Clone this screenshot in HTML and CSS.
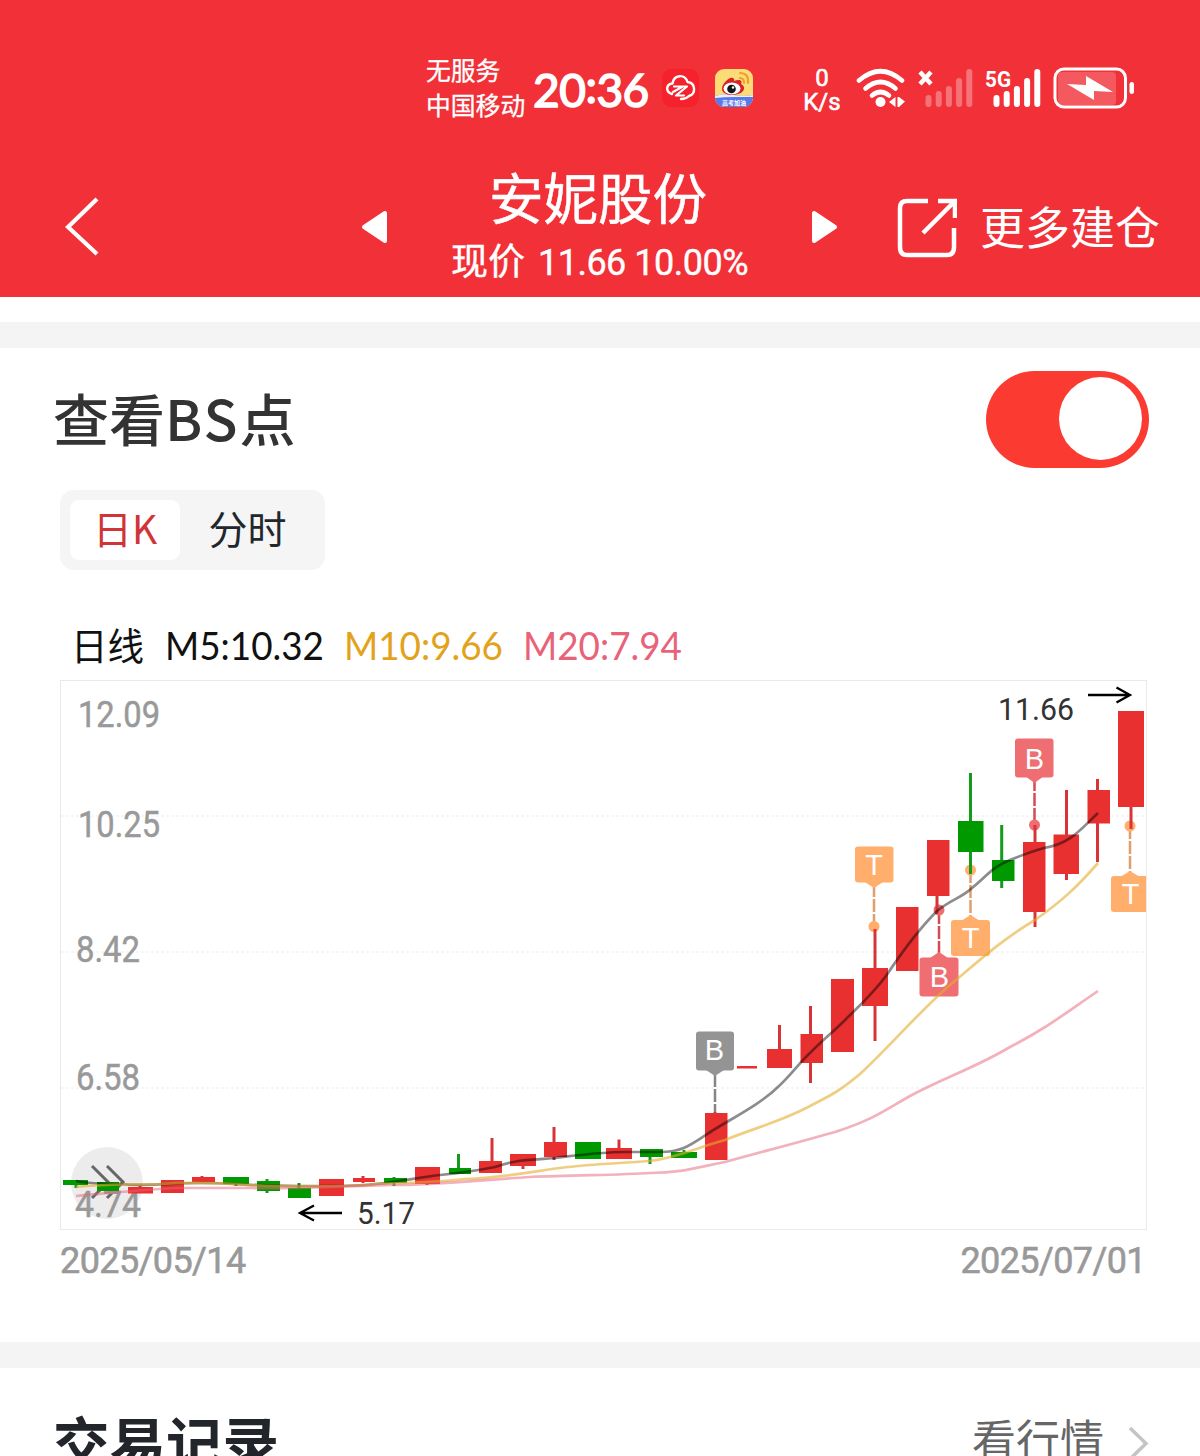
FILE: index.html
```html
<!DOCTYPE html>
<html lang="zh-CN">
  <head>
    <meta charset="UTF-8" />
    <meta name="viewport" content="width=device-width, initial-scale=1.0" />
    <title>安妮股份</title>
    <link rel="stylesheet" href="styles.css">
  </head>
  <body>
    <header class="header">
      <div class="status">
        <div class="carrier">
          <span>无服务</span>
          <span>中国移动</span>
        </div>
        <span class="clock">20<span class="colon">:</span>36</span>
        <svg class="app-icon" width="38" height="38" viewBox="0 0 38 38">
          <rect width="37" height="38" rx="9" fill="#f5222d" />
          <g fill="none" stroke="#fff" stroke-width="2.4" stroke-linecap="round" stroke-linejoin="round">
            <path d="M10 25C3 23 4 15 10.500 14.500C12 5 23 5 25.500 13C34 14 34 25 27 27C25 29 22 30 19 30" />
            <path d="M12 17.500H25L14 26.500H22M20 18L11 23" stroke-width="2.200" />
          </g>
        </svg>
        <svg class="app-icon weibo" width="38" height="38" viewBox="0 0 38 38">
          <defs>
            <clipPath id="weibo-clip"><rect width="38" height="38" rx="9" /></clipPath>
          </defs>
          <g clip-path="url(#weibo-clip)">
            <rect width="38" height="38" fill="#fddc78" />
            <path d="M0 27Q9 24 19 26T38 26V38H0Z" fill="#5b78e8" />
            <path d="M0 27Q9 24 19 26T38 26V28Q29 28 19 28T0 29Z" fill="#e6effc" />
          </g>
          <path d="M7 20C7 14 15 7 18 9C20 10 19 12 19 12C24 10 28 11 26 15C31 17 31 25 18 26C12 26 7 24 7 20Z" fill="#d9232a" />
          <ellipse cx="17" cy="19.500" rx="8.500" ry="6" fill="#fff" />
          <circle cx="16.500" cy="20" r="4.300" fill="#161616" />
          <circle cx="18" cy="18.500" r="1.200" fill="#fff" />
          <path d="M25 9Q29 9 29 14M25 4Q34 4 33 14" fill="none" stroke="#f0a02c" stroke-width="2.200" stroke-linecap="round" />
          <text x="19" y="36" class="weibo-text">高考加油</text>
        </svg>
        <div class="speed">
          <span>0</span>
          <span>K/s</span>
        </div>
        <svg class="signals" width="280" height="44" viewBox="856 66 280 44">
          <g fill="none" stroke="#fff" stroke-width="4.600" stroke-linecap="round">
            <path d="M859 80.500Q880.500 62 902 80.500" />
            <path d="M865.500 88.500Q880.500 75.500 895.500 88.500" />
            <path d="M872 95.500Q880.500 88.500 889 95.500" />
          </g>
          <circle cx="880.500" cy="102" r="5" fill="#fff" />
          <path d="M889 102L895.500 97V107ZM897.500 97H899L905 101.500L899 107H897.500Z" fill="#fff" />
          <path d="M920 72L931 84M931 72L920 84" stroke="#fff" stroke-width="4.500" />
          <g stroke="#fff" stroke-width="6" stroke-linecap="round" opacity="0.32">
            <path d="M928.500 98V104M938.700 94V104M948.900 89V104M959.100 81V104M969.300 72V104" />
          </g>
          <text x="985" y="87" class="net" textLength="26" lengthAdjust="spacingAndGlyphs">5G</text>
          <path d="M996.500 98V104M1006.700 94V104M1016.900 89V104M1027.100 81V104M1037.300 72V104" stroke="#fff" stroke-width="6" stroke-linecap="round" />
          <rect x="1058" y="72" width="58" height="33" rx="4" fill="#fff" opacity="0.2" />
          <rect x="1055" y="69" width="70.500" height="38" rx="9" fill="none" stroke="#fff" stroke-width="3" />
          <rect x="1129.500" y="82" width="4.500" height="12" rx="2.200" fill="#fff" />
          <path d="M1067 84L1086 85V76L1113 92L1094 91V100Z" fill="#fff" />
        </svg>
      </div>
      <nav class="nav">
        <svg class="back" width="34" height="60" viewBox="0 0 34 60">
          <path d="M32 2L3 30L32 57" fill="none" stroke="#fff" stroke-width="4.200" />
        </svg>
        <svg class="prev" width="28" height="34" viewBox="0 0 28 34">
          <path d="M3 17L24 3V31Z" fill="#fff" stroke="#fff" stroke-width="4" stroke-linejoin="round" />
        </svg>
        <div class="stock">
          <h1 class="stock-name">安妮股份</h1>
          <p class="stock-price">现价<span class="price-num">11.66 10.00%</span></p>
        </div>
        <svg class="next" width="28" height="34" viewBox="0 0 28 34">
          <path d="M25 17L4 3V31Z" fill="#fff" stroke="#fff" stroke-width="4" stroke-linejoin="round" />
        </svg>
        <svg class="share" width="60" height="60" viewBox="0 0 60 60">
          <path d="M31 3H10Q3 3 3 10V49Q3 57 10 57H50Q57 57 57 49V30M41 3H58V20M57 4L26 35" fill="none" stroke="#fff" stroke-width="4.500" />
        </svg>
        <span class="more">更多建仓</span>
      </nav>
    </header>

    <main>
      <section class="card chart-card">
        <div class="card-head">
          <h2 class="card-title">查看<span class="latin">BS</span>点</h2>
          <span class="switch"><i class="switch-knob"></i></span>
        </div>
        <div class="tabs">
          <span class="tab tab_active">日K</span>
          <span class="tab">分时</span>
        </div>
        <svg class="chart" width="1200" height="610" viewBox="0 620 1200 610">
          <defs>
            <clipPath id="plot"><rect x="60" y="680" width="1086" height="550" /></clipPath>
          </defs>
          <g class="legend">
            <text x="71" y="660" textLength="73" lengthAdjust="spacingAndGlyphs">日线</text>
            <text x="165" y="660" textLength="159" lengthAdjust="spacingAndGlyphs">M5:10.32</text>
            <text x="344" y="660" textLength="159" lengthAdjust="spacingAndGlyphs" class="m10">M10:9.66</text>
            <text x="523" y="660" textLength="159" lengthAdjust="spacingAndGlyphs" class="m20">M20:7.94</text>
          </g>
          <rect x="60.500" y="680.500" width="1086" height="549" fill="none" stroke="#e9e9e9" />
          <path d="M61 816H1146M61 952H1146M61 1088H1146" stroke="#f4f4f4" stroke-width="1.500" stroke-dasharray="3 2" />
          <circle cx="107" cy="1183" r="36" fill="#ececec" />
          <path d="M92 1166L108 1182L92 1198M107 1166L123 1182L107 1198" class="expand" />
          <g class="axis">
            <text x="78" y="727" textLength="82" lengthAdjust="spacingAndGlyphs">12.09</text>
            <text x="78" y="837" textLength="82" lengthAdjust="spacingAndGlyphs">10.25</text>
            <text x="76" y="962" textLength="64" lengthAdjust="spacingAndGlyphs">8.42</text>
            <text x="76" y="1090" textLength="64" lengthAdjust="spacingAndGlyphs">6.58</text>
            <text x="75" y="1217" textLength="66" lengthAdjust="spacingAndGlyphs">4.74</text>
          </g>
          <!-- buy / sell marks -->
          <g clip-path="url(#plot)">
            <g class="mark mark_gray">
              <path class="stem" d="M715 1074V1112" />
              <path d="M706 1070L715 1076L724 1070Z" />
              <rect x="696" y="1031.500" width="38" height="39" rx="3" />
              <text x="714.500" y="1060">B</text>
            </g>
            <g class="mark mark_sell">
              <path class="stem" d="M874 884V926" />
              <circle cx="874" cy="926.500" r="5.500" />
              <path d="M865 882L874 888L883 882Z" />
              <rect x="855" y="846.500" width="38.500" height="36" rx="3" />
              <text x="874" y="875">T</text>
            </g>
            <g class="mark mark_buy">
              <path class="stem" d="M939 911V956" />
              <circle cx="939" cy="910" r="5.500" />
              <path d="M930 958L939 952L948 958Z" />
              <rect x="919.500" y="957.500" width="39" height="39" rx="3" />
              <text x="939.500" y="987">B</text>
            </g>
            <g class="mark mark_sell">
              <path class="stem" d="M970.500 870V918" />
              <circle cx="970.500" cy="870" r="5.500" />
              <path d="M961 921L970.500 915L980 921Z" />
              <rect x="951" y="920" width="39" height="36" rx="3" />
              <text x="970.500" y="948">T</text>
            </g>
            <g class="mark mark_buy">
              <path class="stem" d="M1034.500 778V825" />
              <circle cx="1034.500" cy="825" r="5.500" />
              <path d="M1025 776L1034.500 783L1044 776Z" />
              <rect x="1015" y="738.500" width="38.500" height="39" rx="3" />
              <text x="1034.500" y="769">B</text>
            </g>
            <g class="mark mark_sell">
              <path class="stem" d="M1130 826V874" />
              <circle cx="1130" cy="826" r="5.500" />
              <path d="M1120 877L1130 871L1140 877Z" />
              <rect x="1111" y="876" width="39" height="36" rx="3" />
              <text x="1130.500" y="904">T</text>
            </g>
          </g>
          <!-- candles: wicks first, bodies on top -->
          <g class="down">
            <path class="wick" d="M76 1183V1188M236 1183V1186M267 1179V1193M299 1183V1190M394 1177V1186M458.500 1154V1172M650 1150V1164M684 1150V1158M970.500 773V874M1001.700 825V888" />
            <path d="M63 1180H88V1185H63ZM97 1182H119V1191H97ZM223 1177H249V1184H223ZM257 1181H280V1191H257ZM288 1188H311V1198H288ZM384 1178H407V1183H384ZM449 1168H471V1174H449ZM575 1142H601V1159H575ZM640 1149H663V1157H640ZM671 1152H697V1158H671ZM958 821H983.500V852H958ZM992 860H1014.500V881H992Z" />
          </g>
          <g class="up">
            <path class="wick" d="M140 1186V1190M202 1176V1182M363 1176V1183M427 1182V1185M492 1138V1164M523 1160V1169M554 1127V1160M619 1139.500V1150M715 1112V1116M779.500 1025V1052M810.500 1006V1083M875 929V1041M937 890V914M1035 825V927M1066.500 790V880M1097.500 779V862M1131 800V829" />
            <path d="M128 1187H153V1193.500H128ZM161 1180H184V1193H161ZM192 1177H215V1182H192ZM319 1179H344V1196H319ZM353 1178H375V1182H353ZM415 1167H440V1184H415ZM479 1161H502V1173H479ZM510 1154H536V1166H510ZM544 1142H567V1157H544ZM606 1148H632V1159H606ZM705 1113H727.500V1160H705ZM737 1066H757V1068.500H737ZM767 1049H792V1068H767ZM800.500 1034H823V1063H800.500ZM831 979H854V1052H831ZM862 968H888V1006H862ZM896 907H918.500V971H896ZM927 840H949.500V896H927ZM1023 842H1045.500V912H1023ZM1053.500 834.500H1079V874H1053.500ZM1087.500 790H1110V823.500H1087.500ZM1118 711H1144V807H1118Z" />
          </g>
          <!-- moving averages -->
          <path class="line line_m5" d="M76 1181C90 1184 105 1184 120 1184C150 1187 165 1183 202 1183C235 1183 250 1186 299 1186C335 1186 350 1187 375 1184C400 1182 420 1177 440 1175C460 1173 475 1171 495 1167C515 1160 525 1160 555 1158C580 1155 600 1152 625 1152H660C685 1152 693 1143 715 1129C740 1114 763 1102 779 1086C792 1074 799 1063 811 1052C825 1038 832 1033 843 1022C862 1003 870 997 886 976C900 955 920 928 937 911C950 900 963 897 972 888C986 877 992 867 1010 860C1025 854 1033 851 1044 848C1070 844 1080 830 1098 813" />
          <path class="line line_m10" d="M76 1187C105 1184 130 1184 160 1184C190 1182 220 1183 250 1185C280 1187 350 1187 375 1184C410 1183 440 1182 465 1179C500 1178 530 1172 560 1168C590 1164 625 1163 650 1161C680 1157 695 1148 725 1140C755 1128 775 1123 800 1111C825 1098 835 1095 860 1074C890 1046 920 1011 950 985C980 960 1000 941 1035 920C1062 901 1077 887 1098 863" />
          <path class="line line_m20" d="M76 1196C110 1193 140 1190 175 1188H250C290 1189 335 1187 390 1185C440 1185 480 1180 530 1177C580 1175 620 1175 650 1173C680 1173 695 1168 725 1162C765 1151 800 1142 835 1132C875 1119 885 1110 910 1096C945 1077 975 1068 1010 1047C1045 1029 1060 1017 1098 991" />
          <g class="extreme">
            <path d="M300 1213H342M314 1205.500L300 1213L314 1220.500" />
            <text x="357" y="1224" textLength="58" lengthAdjust="spacingAndGlyphs">5.17</text>
            <path d="M1088 695H1130M1116.500 687.500L1130 695L1116.500 702.500" />
            <text x="998" y="720" textLength="76" lengthAdjust="spacingAndGlyphs">11.66</text>
          </g>
        </svg>
        <div class="dates">
          <span>2025/05/14</span>
          <span>2025/07/01</span>
        </div>
      </section>

      <section class="card trades">
        <h2 class="trades-title">交易记录</h2>
        <span class="quote">看行情</span>
        <svg class="quote-arrow" width="22" height="36" viewBox="0 0 22 36">
          <path d="M2 2L18 17.500L2 33" fill="none" stroke="#c4c4c4" stroke-width="3.500" />
        </svg>
      </section>
    </main>
  </body>
</html>
```

FILE: styles.css
```css
* {
  box-sizing: border-box;
}

body {
  margin: 0;
  height: 1456px;
  overflow: hidden;
  background-color: #f4f4f4;
  font-family: "Noto Sans CJK SC", sans-serif;
}

h1,
h2,
p {
  margin: 0;
  font-weight: 400;
}

svg {
  display: block;
  flex: none;
}

span {
  white-space: nowrap;
}

.header {
  height: 297px;
  background-color: #f13038;
  color: #fff;
}

.status {
  display: flex;
  height: 158px;
  padding: 54px 0 0 426px;
}

.carrier {
  display: flex;
  flex-direction: column;
  width: 107px;
  margin-top: -2px;
  font-size: 24.800px;
  line-height: 35px;
  -webkit-text-stroke: 0.300px #fff;
}

.clock {
  width: 129px;
  font-family: Lato, sans-serif;
  font-size: 46px;
  font-weight: 400;
  letter-spacing: -0.500px;
  line-height: 71px;
  -webkit-text-stroke: 1.600px #fff;
}

.colon {
  display: inline-block;
  margin-top: -4px;
  vertical-align: 4px;
  line-height: 1;
}

.app-icon {
  margin-top: 15px;
}

.weibo {
  margin-left: 15px;
}

.weibo-text {
  fill: #fff;
  font-size: 6px;
  font-weight: 700;
  text-anchor: middle;
}

.speed {
  display: flex;
  flex-direction: column;
  align-items: center;
  width: 40px;
  margin: 12px 14px 0 49px;
  font-family: Roboto, sans-serif;
  font-size: 24px;
  line-height: 24px;
  -webkit-text-stroke: 0.600px #fff;
}

.signals {
  margin-top: 12px;
}

.net {
  fill: #fff;
  font-family: Roboto, sans-serif;
  font-size: 22px;
  font-weight: 700;
}

.nav {
  display: flex;
  height: 139px;
  padding-left: 65px;
}

.back {
  margin-top: 39px;
}

.prev {
  margin: 52px 0 0 262px;
}

.stock {
  width: 421px;
  text-align: center;
}

.stock-name {
  height: 80px;
  margin-left: -3px;
  font-size: 54.500px;
  line-height: 75px;
  -webkit-text-stroke: 0.500px #fff;
}

.stock-price {
  font-size: 37px;
  line-height: 43px;
  -webkit-text-stroke: 0.400px #fff;
}

.price-num {
  margin-left: 13px;
  font-family: Roboto, sans-serif;
  font-size: 36px;
  letter-spacing: -0.500px;
}

.next {
  margin-top: 52px;
}

.share {
  margin: 40px 23px 0 59px;
}

.more {
  margin-top: 38px;
  font-size: 45px;
  font-weight: 400;
  line-height: 60px;
}

.card {
  background-color: #fff;
}

/* white strip between the header and the first divider */
main::before {
  content: "";
  display: block;
  height: 25px;
  background-color: #fff;
}

.chart-card {
  height: 994px;
  margin-top: 26px;
}

.card-head {
  display: flex;
  justify-content: space-between;
  height: 142px;
  padding: 23px 51px 0 53px;
}

.card-title {
  color: #333;
  font-size: 56px;
  font-weight: 500;
  line-height: 92px;
}

.latin {
  letter-spacing: 2px;
}

.switch {
  width: 163px;
  height: 97px;
  padding: 6px 7px;
  border-radius: 49px;
  background-color: #fb3b32;
}

.switch-knob {
  display: block;
  width: 83px;
  height: 83px;
  margin-left: auto;
  border-radius: 50%;
  background-color: #fff;
}

.tabs {
  display: flex;
  width: 265px;
  height: 80px;
  margin-left: 60px;
  padding: 10px;
  border-radius: 14px;
  background-color: #f5f5f5;
}

.tab {
  width: 135px;
  color: #22272c;
  font-size: 39px;
  line-height: 54px;
  text-align: center;
}

.tab_active {
  width: 110px;
  border-radius: 9px;
  background-color: #fff;
  color: #d03438;
}

.chart {
  margin-top: 50px;
}

.legend {
  fill: #111;
  font-family: Lato, "Noto Sans CJK SC", sans-serif;
  font-size: 38px;
}

.m10 {
  fill: #e3a21b;
}

.m20 {
  fill: #e8637a;
}

.axis {
  fill: #999;
  stroke: #999;
  stroke-width: 0.500px;
  font-family: Roboto, sans-serif;
  font-size: 36px;
}

.expand {
  fill: none;
  stroke: #666;
  stroke-width: 3;
}

.up {
  fill: #e83030;
}

.down {
  fill: #009a00;
}

.wick {
  fill: none;
  stroke-width: 3;
}

.up .wick {
  stroke: #d83437;
}

.down .wick {
  stroke: #149a1c;
}

.mark text {
  fill: #fff;
  font-family: "Liberation Sans", sans-serif;
  font-size: 29px;
  text-anchor: middle;
}

.stem {
  fill: none;
  stroke-width: 2.500;
  stroke-dasharray: 13 2;
}

.mark_gray {
  fill: #949494;
}

.mark_gray .stem {
  stroke: #858585;
}

.mark_buy {
  fill: #ee6e71;
}

.mark_buy .stem {
  stroke: #d44c52;
}

.mark_sell {
  fill: #ffae6b;
}

.mark_sell .stem {
  stroke: #dda06d;
}

.line {
  fill: none;
  stroke-width: 2.700;
}

.line_m5 {
  stroke: rgba(0, 0, 0, 0.45);
}

.line_m10 {
  stroke: rgba(228, 174, 47, 0.6);
}

.line_m20 {
  stroke: rgba(232, 99, 122, 0.5);
}

.extreme {
  fill: #333;
  font-family: Roboto, sans-serif;
  font-size: 32px;
}

.extreme path {
  fill: none;
  stroke: #000;
  stroke-width: 2.300;
}

.dates {
  display: flex;
  justify-content: space-between;
  padding: 6px 54px 0 60px;
  color: #999;
  font-family: Roboto, sans-serif;
  font-size: 36px;
  letter-spacing: -0.600px;
  line-height: 50px;
  -webkit-text-stroke: 0.600px #999;
}

.trades {
  display: flex;
  height: 88px;
  margin-top: 26px;
  padding: 30px 50px 0 53px;
  overflow: hidden;
}

.trades-title {
  color: #22252a;
  font-size: 56.500px;
  font-weight: 700;
  line-height: 84px;
}

.quote {
  margin-left: auto;
  color: #666;
  font-size: 44px;
  line-height: 80px;
}

.quote-arrow {
  margin: 28px 0 0 24px;
}
```
